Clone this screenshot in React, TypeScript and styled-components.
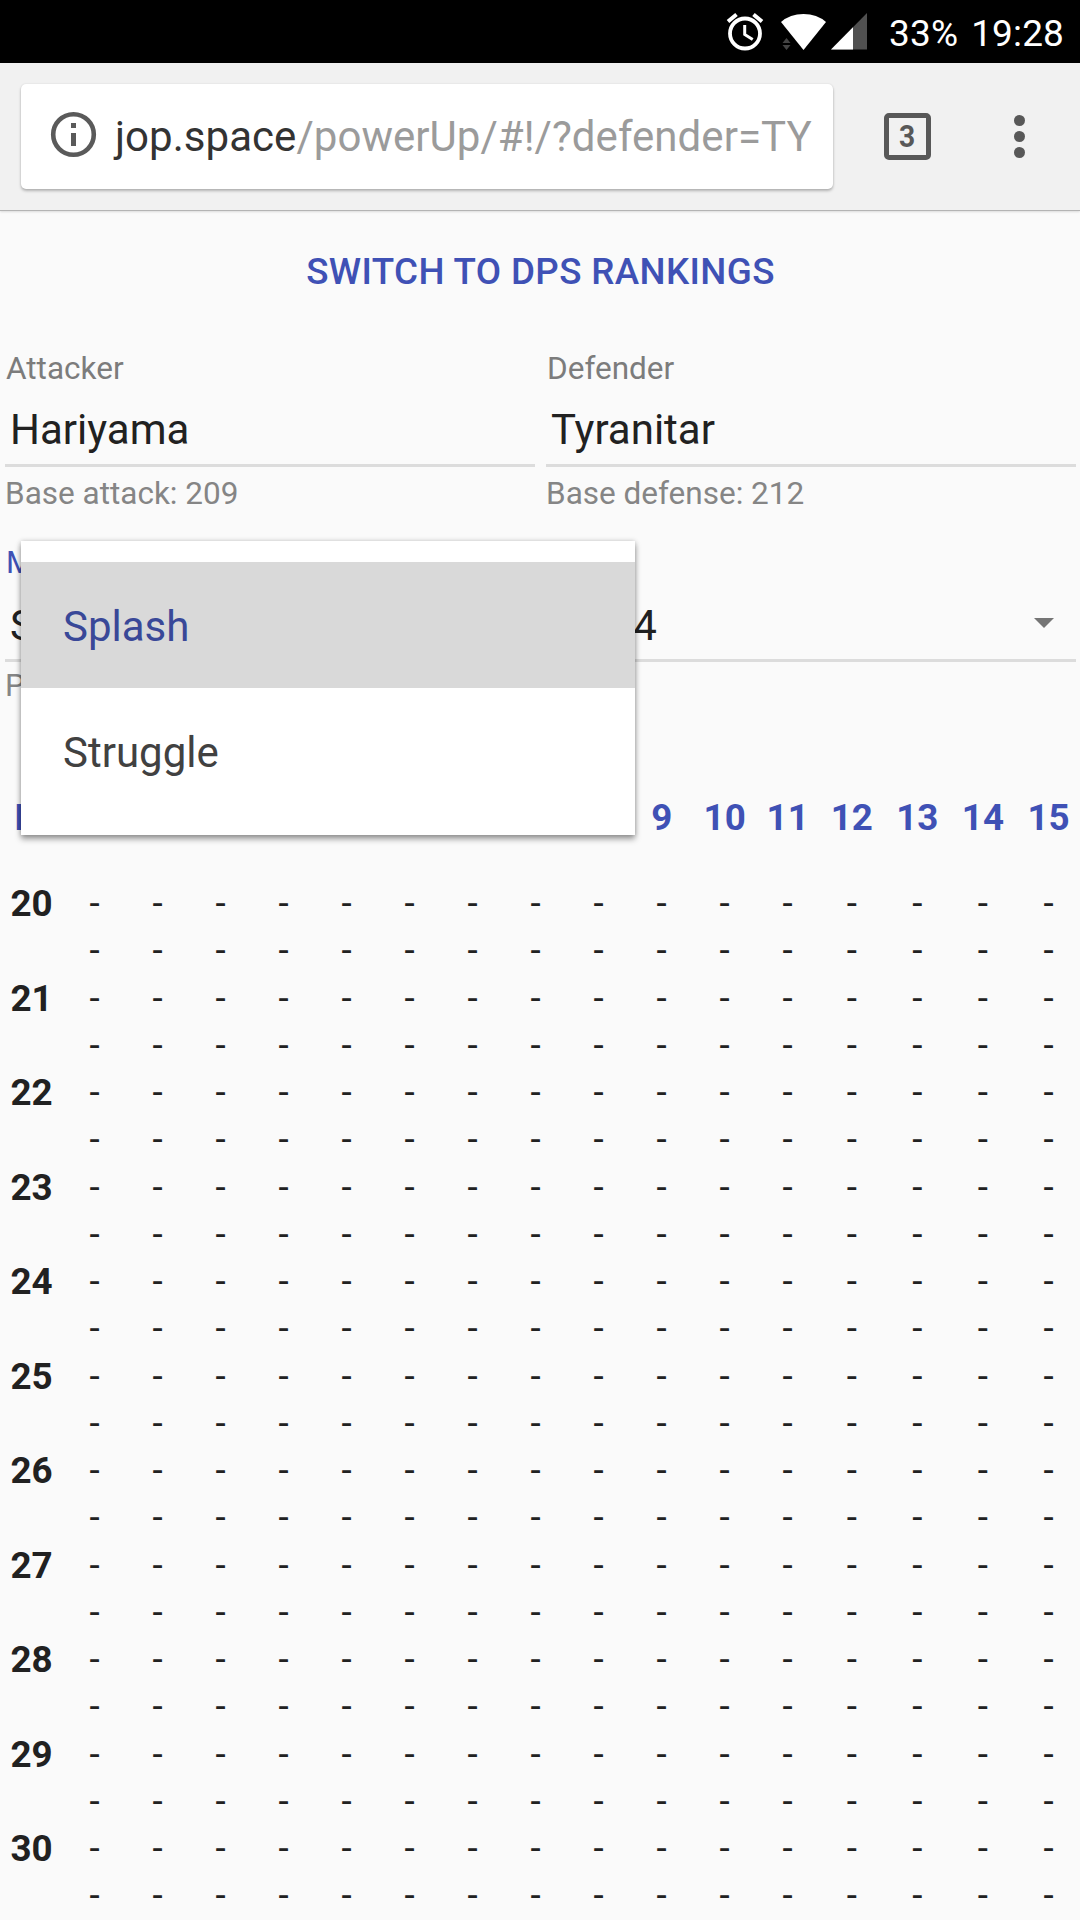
import React from 'react';
import styled, { createGlobalStyle } from 'styled-components';

const GlobalStyle = createGlobalStyle`
  html, body { margin: 0; padding: 0; background: #fafafa; }
  * { box-sizing: border-box; }
`;

const Screen = styled.div`
  position: relative;
  display: flex;
  flex-direction: column;
  width: 1080px;
  height: 1920px;
  overflow: hidden;
  background: #fafafa;
  color: #212121;
  font-family: Roboto, 'Liberation Sans', sans-serif;
`;

const StatusBar = styled.header`
  display: flex;
  flex: none;
  align-items: center;
  height: 63px;
  padding-left: 726px;
  background: #000;
  color: #fff;
  font-size: 37px;
  letter-spacing: 0.15px;
  white-space: pre;
`;

const StatusIcons = styled.svg`
  flex: none;
  width: 142px;
  height: 63px;
`;

const Battery = styled.span`
  margin-left: 21px;
  padding-top: 3px;
`;

const Clock = styled.span`
  margin-left: 13px;
  padding-top: 3px;
`;

const Toolbar = styled.div`
  display: flex;
  flex: none;
  align-items: flex-start;
  height: 148px;
  padding: 21px 0 0 21px;
  background: #f1f1f1;
  border-bottom: 1px solid #b4b4b4;
  box-shadow: 0 1px 2px rgba(0, 0, 0, 0.12);
  z-index: 1;
`;

const UrlBox = styled.div`
  display: flex;
  align-items: center;
  width: 812px;
  height: 105px;
  padding-left: 29px;
  overflow: hidden;
  background: #fff;
  border-radius: 5px;
  box-shadow: 0 2px 3px rgba(0, 0, 0, 0.26), 0 0 2px rgba(0, 0, 0, 0.1);
`;

const InfoIcon = styled.svg`
  flex: none;
  width: 47px;
  height: 47px;
  margin-bottom: 4px;
`;

const UrlText = styled.div`
  margin-left: 18px;
  color: #9b9b9b;
  font-size: 42px;
  letter-spacing: 0.04px;
  line-height: 50px;
  white-space: nowrap;
`;

const Host = styled.span`
  color: #333;
`;

const TabCount = styled.div`
  display: flex;
  align-items: center;
  justify-content: center;
  width: 47px;
  height: 47px;
  margin: 29px 0 0 51px;
  border: 5px solid #585858;
  border-radius: 5px;
  color: #585858;
  font-size: 32px;
  font-weight: 700;
  line-height: 37px;
`;

const TabDigit = styled.span`
  transform: scaleX(0.88);
`;

const MoreDots = styled.div`
  display: flex;
  flex-direction: column;
  gap: 5px;
  margin: 31px 0 0 83px;
`;

const Dot = styled.span`
  width: 11px;
  height: 11px;
  border-radius: 50%;
  background: #585858;
`;

const SwitchButton = styled.button`
  flex: none;
  height: 120px;
  padding: 2px 0 0 1px;
  border: 0;
  background: none;
  color: #3f51b5;
  font: 500 36.75px/118px Roboto, sans-serif;
  letter-spacing: 0.01em;
  text-transform: uppercase;
`;

const FieldRow = styled.section<{ $height: number }>`
  display: grid;
  flex: none;
  grid-template-columns: 530px 530px;
  column-gap: 11px;
  height: ${(p) => p.$height}px;
  padding: 20px 0 0 5px;
`;

const Field = styled.div`
  display: flex;
  flex-direction: column;
`;

const Label = styled.label<{ $active?: boolean }>`
  height: 36px;
  padding-left: 1px;
  color: ${(p) => (p.$active ? '#3f51b5' : '#7c7c7c')};
  font-size: 31.5px;
  line-height: 36px;
`;

const Value = styled.div<{ $height: number; $shift: number }>`
  display: flex;
  align-items: center;
  justify-content: space-between;
  height: ${(p) => p.$height}px;
  padding: ${(p) => p.$shift}px 22px 0 5px;
  border-bottom: 3px solid #dcdcdc;
  font-size: 42px;
  line-height: 60px;
`;

const Hint = styled.div<{ $height: number }>`
  height: ${(p) => p.$height}px;
  color: #858585;
  font-size: 31.5px;
  line-height: ${(p) => p.$height}px;
`;

const Arrow = styled.span`
  margin-bottom: 5px;
  border: 10px solid transparent;
  border-top-color: #757575;
  border-bottom: 0;
`;

const Table = styled.div`
  display: flex;
  flex: none;
  flex-direction: column;
  padding-top: 66px;
  font-size: 36.75px;
`;

const Row = styled.div<{ $header?: boolean }>`
  display: grid;
  grid-template-columns: 63.2px repeat(12, 63px) 65.2px repeat(3, 65.7px);
  height: ${(p) => (p.$header ? 87 : 47.25)}px;
  margin-bottom: ${(p) => (p.$header ? 19 : 0)}px;
  line-height: ${(p) => (p.$header ? 87 : 47.25)}px;
  color: ${(p) => (p.$header ? '#3f51b5' : '#212121')};
  font-weight: ${(p) => (p.$header ? 700 : 400)};
  text-align: center;
`;

const Corner = styled.span`
  padding-left: 2px;
`;

const Level = styled.span`
  font-weight: 700;
`;

const Menu = styled.div`
  position: absolute;
  top: 541px;
  left: 21px;
  z-index: 2;
  width: 614px;
  height: 294px;
  padding: 21px 0;
  background: #fff;
  box-shadow: 0 4px 6px rgba(0, 0, 0, 0.38), 0 0 5px rgba(0, 0, 0, 0.18);
`;

const MenuItem = styled.div<{ $selected?: boolean }>`
  height: 126px;
  padding-left: 42px;
  background: ${(p) => (p.$selected ? '#d9d9d9' : '#fff')};
  color: ${(p) => (p.$selected ? '#394898' : '#414141')};
  font-size: 42px;
  line-height: 130px;
`;

const columns = Array.from({ length: 16 }, (_, i) => i);
const rows = Array.from({ length: 22 }, (_, i) => 20 + i / 2);

function App() {
  return (
    <Screen>
      <GlobalStyle />
      <StatusBar>
        <StatusIcons viewBox="726 0 142 63">
          <g fill="none" stroke="#fff">
            <circle cx="745" cy="33.5" r="15" strokeWidth="3.8" />
            <path d="M744.7 25v9.5l8 5" strokeWidth="3" />
            <path d="M728 21.5l8.5-7M762 21.5l-8.5-7" strokeWidth="4" />
          </g>
          <path d="M781 22Q790 14 803.5 14T826 22L803.5 50Z" fill="#fff" />
          <path d="M782.5 43l4-5 4 5zM782.5 45h8l-4 5z" fill="#444" />
          <path d="M831 49.5L867 13V49.5Z" fill="#505050" />
          <path d="M831 49.5L853 27.2V49.5Z" fill="#fff" />
        </StatusIcons>
        <Battery>33%</Battery>
        <Clock>19:28</Clock>
      </StatusBar>
      <Toolbar>
        <UrlBox>
          <InfoIcon viewBox="0 0 47 47">
            <circle cx="23.5" cy="23.5" r="20.3" fill="none" stroke="#5a5a5a" strokeWidth="4.6" />
            <path d="M21 12h5v5h-5zM21 22h5v13h-5z" fill="#5a5a5a" />
          </InfoIcon>
          <UrlText>
            <Host>jop.space</Host>/powerUp/#!/?defender=TY
          </UrlText>
        </UrlBox>
        <TabCount>
          <TabDigit>3</TabDigit>
        </TabCount>
        <MoreDots>
          <Dot />
          <Dot />
          <Dot />
        </MoreDots>
      </Toolbar>
      <SwitchButton>Switch to DPS rankings</SwitchButton>
      <FieldRow $height={194}>
        <Field>
          <Label>Attacker</Label>
          <Value $height={80} $shift={8}>Hariyama</Value>
          <Hint $height={53}>Base attack: 209</Hint>
        </Field>
        <Field>
          <Label>Defender</Label>
          <Value $height={80} $shift={8}>Tyranitar</Value>
          <Hint $height={53}>Base defense: 212</Hint>
        </Field>
      </FieldRow>
      <FieldRow $height={183}>
        <Field>
          <Label $active>Move</Label>
          <Value $height={81} $shift={11}>Splash</Value>
          <Hint $height={48}>Power: 0</Hint>
        </Field>
        <Field>
          <Label />
          <Value $height={81} $shift={11}>
            Tier 4
            <Arrow />
          </Value>
        </Field>
      </FieldRow>
      <Table>
        <Row $header>
          <Corner>Lv</Corner>
          {columns.map((c) => (
            <span key={c}>{c}</span>
          ))}
        </Row>
        {rows.map((level) => (
          <Row key={level}>
            <Level>{Number.isInteger(level) ? level : ''}</Level>
            {columns.map((c) => (
              <span key={c}>-</span>
            ))}
          </Row>
        ))}
      </Table>
      <Menu>
        <MenuItem $selected>Splash</MenuItem>
        <MenuItem>Struggle</MenuItem>
      </Menu>
    </Screen>
  );
}

export default App;
